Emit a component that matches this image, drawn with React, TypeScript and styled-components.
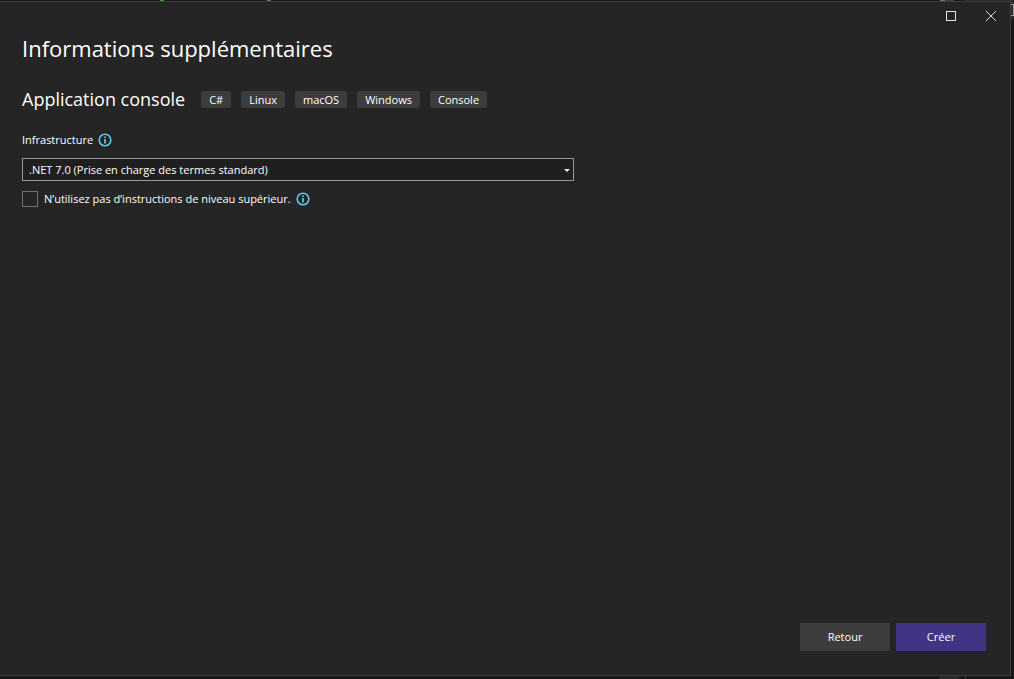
import React from "react";
import styled, { createGlobalStyle } from "styled-components";

const GlobalStyle = createGlobalStyle`
  *, *::before, *::after { box-sizing: border-box; }
  body { margin: 0; background: #18181a; }
  button, select, input { font: inherit; color: inherit; }
`;

const Desktop = styled.div`
  position: relative;
  display: flex;
  min-height: 100vh;
  padding: 1px 3px 3px 0;
  background: #18181a;
  color: #fff;
  font: 11px/16px "Open Sans", "Noto Sans", sans-serif;
`;

const Fragment = styled.span<{ $x: number; $y: "top" | "bottom"; $w: number; $h: number; $color: string }>`
  position: absolute;
  left: ${(p) => p.$x}px;
  ${(p) => p.$y}: 0;
  width: ${(p) => p.$w}px;
  height: ${(p) => p.$h}px;
  background: ${(p) => p.$color};
`;

const EdgeBracket = styled.span`
  position: absolute;
  top: 4px;
  right: 0;
  width: 3px;
  height: 12px;
  border: 1px solid #9a9a9a;
  border-left: 0;
`;

const Dialog = styled.main`
  position: relative;
  flex: 1;
  display: flex;
  flex-direction: column;
  border: 1px solid #3d3d3d;
  border-left: 0;
  background: #252525;
`;

const TitleBar = styled.header`
  display: flex;
  justify-content: flex-end;
  gap: 2px;
  height: 28px;
`;

const CaptionButton = styled.button`
  display: grid;
  place-items: center;
  width: 38px;
  padding: 0;
  border: 0;
  background: none;
`;

const Content = styled.section`
  flex: 1;
  padding: 0 22px;
`;

const Title = styled.h1`
  margin: 0;
  font-size: 22px;
  font-weight: 400;
  line-height: 36px;
`;

const TemplateRow = styled.div`
  display: flex;
  align-items: center;
  gap: 16px;
  margin-top: 20px;
`;

const TemplateName = styled.h2`
  margin: 0;
  font-size: 18px;
  font-weight: 400;
  line-height: 27px;
`;

const Tags = styled.ul`
  display: flex;
  gap: 10px;
  margin: 0;
  padding: 0;
  list-style: none;
`;

const Tag = styled.li`
  padding: 0 8px;
  border-radius: 3px;
  background: #3d3d3d;
  line-height: 17px;
`;

const Field = styled.div`
  display: flex;
  align-items: center;
  gap: 5px;
`;

const FrameworkField = styled(Field)`
  margin: 19px 0 10px;
`;

const SelectBox = styled.div`
  position: relative;
  width: 58%;
  max-width: 552px;
`;

const Select = styled.select`
  display: block;
  width: 100%;
  height: 23px;
  padding: 0 20px 0 6px;
  border: 1px solid #999;
  border-radius: 0;
  background: #1f1f1f;
  appearance: none;
`;

const Arrow = styled.svg`
  position: absolute;
  right: 4px;
  top: 11px;
  pointer-events: none;
`;

const OptionField = styled(Field)`
  margin-top: 10px;
`;

const OptionLabel = styled.label`
  display: flex;
  align-items: center;
  gap: 6px;
`;

const CheckBox = styled.input`
  appearance: none;
  width: 16px;
  height: 16px;
  margin: 0;
  border: 1px solid #717171;
  background: #252525;
`;

const InfoButton = styled.button`
  display: flex;
  padding: 0;
  border: 0;
  background: none;
`;

const Footer = styled.footer`
  display: flex;
  justify-content: flex-end;
  gap: 6px;
  padding: 24px;
`;

const Action = styled.button<{ $primary?: boolean }>`
  width: 90px;
  height: 28px;
  padding: 0;
  border: 0;
  background: ${(p) => (p.$primary ? "#413484" : "#3d3d3d")};
`;

const Info = () => (
  <InfoButton type="button" aria-label="Informations">
    <svg width="14" height="14" viewBox="0 0 14 14" fill="none">
      <circle cx="7" cy="7" r="5.8" stroke="#64c6ea" strokeWidth="1.6" />
      <path d="M7 3.4v1.7M7 6v4.6" stroke="#64c6ea" strokeWidth="1.7" />
    </svg>
  </InfoButton>
);

const tags = ["C#", "Linux", "macOS", "Windows", "Console"];

export default function App() {
  return (
    <>
      <GlobalStyle />
      <Desktop>
        <Fragment $x={160} $y="top" $w={4} $h={1} $color="#3f9a35" />
        <Fragment $x={267} $y="top" $w={4} $h={1} $color="#3f9a35" />
        <Fragment $x={940} $y="top" $w={5} $h={1} $color="#3f9a35" />
        <Fragment $x={945} $y="top" $w={9} $h={1} $color="#3d3d3d" />
        <Fragment $x={965} $y="top" $w={49} $h={1} $color="#2d2d2e" />
        <Fragment $x={1011} $y="top" $w={3} $h={19} $color="#2d2d2e" />
        <Fragment $x={939} $y="bottom" $w={20} $h={3} $color="#2a2a2b" />
        <Fragment $x={965} $y="bottom" $w={1} $h={3} $color="#3d3d3d" />
        <EdgeBracket />
        <Dialog>
          <TitleBar>
            <CaptionButton type="button" aria-label="Agrandir">
              <svg width="10" height="10" fill="none">
                <rect x="0.5" y="0.5" width="9" height="9" stroke="#e6e6e6" />
              </svg>
            </CaptionButton>
            <CaptionButton type="button" aria-label="Fermer">
              <svg width="10" height="10" fill="none">
                <path d="M0 0L10 10M10 0L0 10" stroke="#d8d8d8" />
              </svg>
            </CaptionButton>
          </TitleBar>
          <Content>
            <Title>Informations supplémentaires</Title>
            <TemplateRow>
              <TemplateName>Application console</TemplateName>
              <Tags>
                {tags.map((tag) => (
                  <Tag key={tag}>{tag}</Tag>
                ))}
              </Tags>
            </TemplateRow>
            <FrameworkField>
              <label htmlFor="framework">Infrastructure</label>
              <Info />
            </FrameworkField>
            <SelectBox>
              <Select id="framework">
                <option>.NET 7.0 (Prise en charge des termes standard)</option>
              </Select>
              <Arrow width="6" height="3" fill="#f0f0f0">
                <path d="M0 0H6L3 3Z" />
              </Arrow>
            </SelectBox>
            <OptionField>
              <OptionLabel>
                <CheckBox type="checkbox" />
                N’utilisez pas d’instructions de niveau supérieur.
              </OptionLabel>
              <Info />
            </OptionField>
          </Content>
          <Footer>
            <Action type="button">Retour</Action>
            <Action type="button" $primary>Créer</Action>
          </Footer>
        </Dialog>
      </Desktop>
    </>
  );
}
